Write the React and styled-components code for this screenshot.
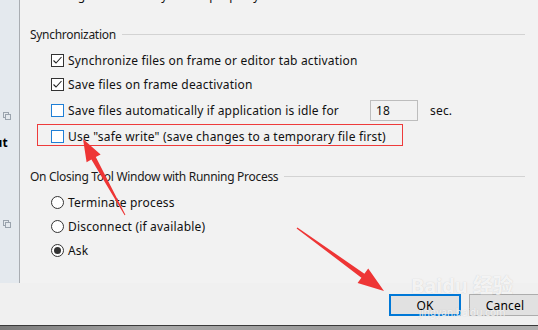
import React from "react";
import styled, { createGlobalStyle, css } from "styled-components";

const Global = createGlobalStyle`
  html, body { margin: 0; padding: 0; background: #f0f0f0; }
  body { font-family: "Noto Sans", "Noto Sans CJK SC", sans-serif; }
`;

const Screen = styled.div`
  position: relative;
  width: 538px;
  height: 330px;
  overflow: hidden;
  display: flex;
  flex-direction: column;
  font-size: 12px;
  letter-spacing: 0.18px;
  color: #111;
`;

const Main = styled.div`
  display: flex;
  height: 283px;
  flex: none;
`;

const Sidebar = styled.div`
  width: 19px;
  border-right: 1px solid #a9adb2;
  background: #e4e9ee;
  display: flex;
  flex-direction: column;
  padding-top: 112px;
  box-sizing: content-box;
`;

const SideIcon = styled.div`
  height: 8px;
  padding-left: 3px;
  margin-top: ${(p) => p.$top || 0}px;
  display: flex;
`;

const SideLabel = styled.div`
  margin-top: ${(p) => p.$top || 0}px;
  height: 16px;
  display: flex;
  justify-content: flex-end;
  overflow: hidden;
  padding-right: 11px;
  font-weight: 700;
  font-size: 12px;
  white-space: nowrap;
  color: #000;
`;

const Content = styled.div`
  flex: 1;
  background: #f2f2f2;
  padding-left: 10px;
  display: flex;
  flex-direction: column;
`;

const CutLine = styled.div`
  height: 5px;
  overflow: hidden;
  padding-left: 22px;
  span {
    display: block;
    line-height: 16px;
    margin-top: -12px;
    white-space: nowrap;
  }
`;

const SectionHeader = styled.div`
  display: flex;
  align-items: center;
  gap: 6px;
  height: 16px;
  margin-top: ${(p) => p.$top}px;
  margin-right: 13px;
  white-space: nowrap;
  letter-spacing: -0.3px;
  color: #1a1a1a;
`;

const Rule = styled.div`
  flex: 1;
  height: 1px;
  background: #d3d3d3;
`;

const Options = styled.div`
  display: flex;
  flex-direction: column;
  padding-left: 21px;
  margin-top: 6px;
`;

const Row = styled.div`
  position: relative;
  display: flex;
  align-items: center;
  gap: 4px;
  height: ${(p) => p.$h || 24}px;
  white-space: nowrap;
  ${(p) =>
    p.$highlight &&
    css`
      &::after {
        content: "";
        position: absolute;
        left: -14px;
        top: 0;
        width: 366px;
        height: 22px;
        box-sizing: border-box;
        border: 1.5px solid #ee3b3b;
      }
    `}
`;

const Box = styled.span`
  width: 13px;
  height: 13px;
  box-sizing: border-box;
  flex: none;
  background: #fff;
  border: 1px solid ${(p) => (p.$checked ? "#333" : "#1f7fd6")};
  display: flex;
  align-items: center;
  justify-content: center;
`;

const Radio = styled.span`
  width: 13px;
  height: 13px;
  box-sizing: border-box;
  flex: none;
  border-radius: 50%;
  background: #fff;
  border: 1px solid #333;
  display: flex;
  align-items: center;
  justify-content: center;
  &::after {
    content: "";
    width: 7px;
    height: 7px;
    border-radius: 50%;
    background: ${(p) => (p.$checked ? "#333" : "transparent")};
  }
`;

const FixedLabel = styled.span`
  width: 298px;
  flex: none;
`;

const NumberField = styled.div`
  width: 48px;
  height: 21px;
  box-sizing: border-box;
  border: 1px solid #bdbdbd;
  background: #f2f2f2;
  padding-left: 5px;
  display: flex;
  align-items: center;
  flex: none;
`;

const Unit = styled.span`
  margin-left: 8px;
`;

const ButtonBar = styled.div`
  height: 42px;
  flex: none;
  background: #f0f0f0;
  display: flex;
  align-items: flex-start;
  gap: 8px;
  padding-left: 389px;
  padding-top: 11px;
  box-sizing: border-box;
`;

const Button = styled.div`
  width: 72px;
  height: 22px;
  flex: none;
  box-sizing: border-box;
  background: #e1e1e1;
  border: ${(p) => (p.$primary ? "2px solid #0078d7" : "1px solid #adadad")};
  display: flex;
  align-items: center;
  justify-content: center;
  color: #000;
`;

const Taskbar = styled.div`
  flex: 1;
  border-top: 1px solid #3a3a3a;
  background: linear-gradient(90deg, #7a7a7a 0%, #a8a8a8 30%, #9a9a9a 60%, #b0b0b0 100%);
`;

const Overlay = styled.svg`
  position: absolute;
  left: 0;
  top: 0;
  pointer-events: none;
`;

const Watermark = styled.div`
  position: absolute;
  left: 416px;
  top: 274px;
  width: 92px;
  display: flex;
  flex-direction: column;
  align-items: center;
  white-space: nowrap;
  color: rgba(255, 255, 255, 0.8);
  text-shadow: 0 0 1px rgba(160, 160, 160, 0.5);
  pointer-events: none;
  letter-spacing: 0;
  strong {
    font-size: 20px;
    font-weight: 700;
    line-height: 24px;
  }
  small {
    font-size: 10px;
    line-height: 12px;
    margin-top: 8px;
  }
`;

const CopyIcon = () => (
  <svg width="8" height="8" viewBox="0 0 8 8">
    <rect x="0.5" y="0.5" width="5" height="5" fill="none" stroke="#9aa3ad" />
    <rect x="2.5" y="2.5" width="5" height="5" fill="#e4e9ee" stroke="#9aa3ad" />
  </svg>
);

const Check = () => (
  <svg width="11" height="11" viewBox="0 0 11 11">
    <polyline points="1.5,5.5 4,8 9.5,2" fill="none" stroke="#222" strokeWidth="1.1" />
  </svg>
);

function CheckOption({ checked, children, h, highlight }) {
  return (
    <Row $h={h} $highlight={highlight}>
      <Box $checked={checked}>{checked && <Check />}</Box>
      {children}
    </Row>
  );
}

function RadioOption({ checked, children }) {
  return (
    <Row>
      <Radio $checked={checked} />
      <span>{children}</span>
    </Row>
  );
}

export default function App() {
  return (
    <Screen>
      <Global />
      <Main>
        <Sidebar>
          <SideIcon>
            <CopyIcon />
          </SideIcon>
          <SideLabel $top={14}>Layout</SideLabel>
          <SideIcon $top={70}>
            <CopyIcon />
          </SideIcon>
        </Sidebar>
        <Content>
          <CutLine>
            <span>Using Ctrl+Tab to cycle the property</span>
          </CutLine>
          <SectionHeader $top={21}>
            <span>Synchronization</span>
            <Rule />
          </SectionHeader>
          <Options>
            <CheckOption checked>
              <span>Synchronize files on frame or editor tab activation</span>
            </CheckOption>
            <CheckOption checked>
              <span>Save files on frame deactivation</span>
            </CheckOption>
            <CheckOption h={28}>
              <FixedLabel>Save files automatically if application is idle for</FixedLabel>
              <NumberField>18</NumberField>
              <Unit>sec.</Unit>
            </CheckOption>
            <CheckOption highlight>
              <span>Use "safe write" (save changes to a temporary file first)</span>
            </CheckOption>
          </Options>
          <SectionHeader $top={20}>
            <span>On Closing Tool Window with Running Process</span>
            <Rule />
          </SectionHeader>
          <Options>
            <RadioOption>Terminate process</RadioOption>
            <RadioOption>Disconnect (if available)</RadioOption>
            <RadioOption checked>Ask</RadioOption>
          </Options>
        </Content>
      </Main>
      <ButtonBar>
        <Button $primary>OK</Button>
        <Button>Cancel</Button>
      </ButtonBar>
      <Taskbar />
      <Watermark>
        <strong>Baidu 经验</strong>
        <small>jingyan.baidu.com</small>
      </Watermark>
      <Overlay width="538" height="330" viewBox="0 0 538 330">
        <polygon
          fill="#ee3535"
          points="83,139 100.6,154.4 95.8,157.1 125.4,214.8 124.6,215.2 91.4,159.5 86.6,162.2"
        />
        <polygon
          fill="#ee3535"
          points="384,291 357.6,283 361.4,277.7 296.6,228.5 297.4,227.5 364.4,273.7 368.2,268.4"
        />
      </Overlay>
    </Screen>
  );
}
